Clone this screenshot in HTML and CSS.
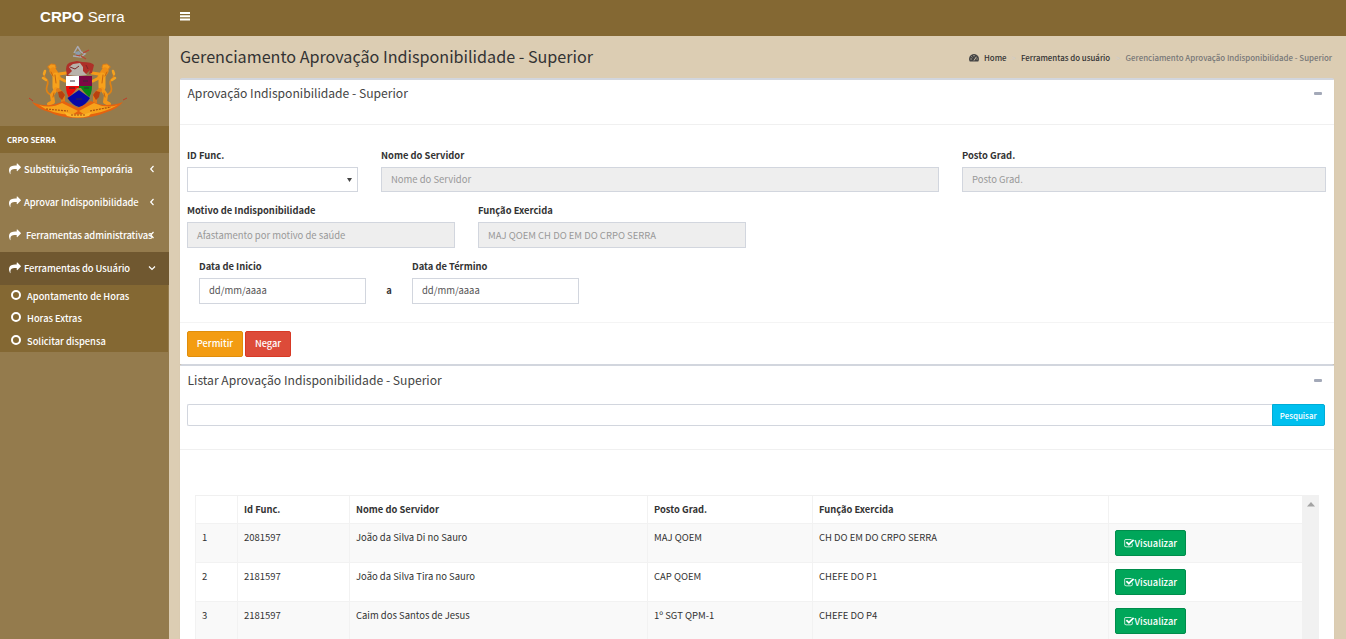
FILE: index.html
```html
<!DOCTYPE html>
<html lang="pt-BR">
<head>
<meta charset="utf-8">
<title>CRPO Serra</title>
<link rel="stylesheet" href="styles.css">
</head>
<body>
<svg class="defs" width="0" height="0">
  <symbol id="share" viewBox="0 0 1792 1792"><path d="M1792 640q0 26-19 45l-512 512q-19 19-45 19t-45-19-19-45v-256h-224q-98 0-175.500 6t-154 21.500-133 42.500-105.500 69.500-80 101-48.500 138.500-17.500 181q0 55 5 123 0 6 2.500 23.500t2.500 26.500q0 15-8.500 25t-23.500 10q-16 0-28-17-7-9-13-22t-13.500-30-10.500-24q-127-285-127-451 0-199 53-333 162-403 875-403h224v-256q0-26 19-45t45-19 45 19l512 512q19 19 19 45z"/></symbol>
  <symbol id="check" viewBox="0 0 1792 1792"><path d="M1472 930v318q0 119-84.500 203.500t-203.500 84.500h-832q-119 0-203.500-84.500t-84.500-203.500v-832q0-119 84.500-203.500t203.500-84.500h832q63 0 117 25 15 7 18 23 3 17-9 29l-49 49q-10 10-23 10-3 0-9-2-23-6-45-6h-832q-66 0-113 47t-47 113v832q0 66 47 113t113 47h832q66 0 113-47t47-113v-254q0-13 9-22l64-64q10-10 23-10 6 0 12 3 20 8 20 29zm231-489l-814 814q-24 24-57 24t-57-24l-430-430q-24-24-24-57t24-57l110-110q24-24 57-24t57 24l263 263 647-647q24-24 57-24t57 24l110 110q24 24 24 57t-24 57z"/></symbol>
</svg>
<header class="topbar">
  <div class="brand"><b>CRPO</b> Serra</div>
  <svg class="burger" width="10" height="9" viewBox="0 0 10 9"><path d="M0 0h10v2H0zM0 3.300h10v2H0zM0 6.600h10v2H0z" fill="#fff"/></svg>
</header>
<div class="page">
  <aside class="sidebar">
    <div class="crest">
      <svg width="100" height="76" viewBox="0 0 100 76">
        <defs>
          <g id="lion" fill="none" stroke-linecap="round" stroke-linejoin="round">
            <path d="M22 50Q16 47 18 41q2-5-1-7-3-3-1-7" stroke="#e08214" stroke-width="1.700"/>
            <path d="M16 26l-1 3M14 33l3 2" stroke="#f3a220" stroke-width="2.500"/>
            <path d="M19 21.500l3-2.500 4 .500 1 3-2 2.500-4-.500z" fill="#f49c1c" stroke="#df7e14"/>
            <path d="M24 26l4 6" stroke="#ee8d14" stroke-width="7"/>
            <path d="M27 31l0 11" stroke="#f7a11b" stroke-width="7"/>
            <path d="M30 29l7-1M30 33l6 3" stroke="#f59a18" stroke-width="3"/>
            <path d="M27 44l-4 6 1 7-4 2" stroke="#f39718" stroke-width="4"/>
            <path d="M29 45l5 5 0 8" stroke="#e17d18" stroke-width="4"/>
            <path d="M29 47l4-1 3 4-3 5-3-3z" fill="#b9400f"/>
            <path d="M26 30l1 8M22 27l2 4M25 48l-1 4" stroke="#c9660f" stroke-width="1"/>
          </g>
        </defs>
        <use href="#lion"/>
        <use href="#lion" transform="translate(100 0) scale(-1 1)"/>
        <path d="M3 57q10 4 18 3 8-1 14-4l14 7 13-7q7 4 15 4 10 0 17-3-6 7-16 10-14 6-29 6-17 0-29-6Q8 64 3 57z" fill="#e5620f"/>
        <path d="M10 60q12 4 23-2l16 8-6 4Q22 69 10 60zM89 60q-12 4-24-2l-15 8 6 4q19-2 33-10z" fill="#f7a21b"/>
        <path d="M35 67q14 5 28 0l-3 4q-11 3-22 0z" fill="#fbb52b"/>
        <path d="M17 64l22 2M61 66l21-4M42 70h14" stroke="#a9500f" stroke-width="1.200" stroke-dasharray="2 1"/>
        <path d="M37 24q0-6 6-7l5-1 5 1q10 0 12 3l-2 8-3 1 1-4-5 5-7-5-5 5-6 1z" fill="#ae3028"/>
        <path d="M44 19l7-1 3 4 0 4 4 4-9 1-10-1 4-4-3-4z" fill="#b8b2aa"/>
        <path d="M41 22l5 2 4-3M57 20l2 4" stroke="#7d2626" fill="none"/>
        <path d="M45 8l4-7M49 2l3 5 4 2-4 3-8-1" fill="none" stroke="#aaa9b2" stroke-width="1.500"/>
        <path d="M46 7l4-1 2 3-5 2z" fill="#8b9dac"/>
        <path d="M47 10l4 1M54 8l6-3M52 11l5 3" stroke="#b94434" stroke-width="1.200"/>
        <path d="M37 31h13v10H37z" fill="#fff"/><path d="M50 31h13v10H50z" fill="#7d0844"/>
        <path d="M37 41h13v4l-9 9q-4-5-4-13z" fill="#f00c08"/><path d="M50 41h13q0 8-4 13l-9-9z" fill="#078414"/>
        <path d="M39 53l6-6 3-4h4l3 4 6 6-2 2H41z" fill="#a88448"/>
        <path d="M38.500 53L50 45l11 8q-4 7-11 9-7-2-11.500-9z" fill="#0808a5"/>
        <path d="M41 36h5M54 36h5M40 43h6M55 43h5M47 54h6" stroke="#362b38" stroke-width="1.300" opacity=".65"/>
        <path d="M0 53l4 3M94 55l4-2" stroke="#c23b28"/>
      </svg>
    </div>
    <div class="side-head"><span>CRPO SERRA</span></div>
    <nav>
      <a class="item"><svg class="ic"><use href="#share"/></svg><span>Substituição Temporária</span><svg class="chev" viewBox="0 0 6 8"><path d="M4.500 1L1.700 4l2.800 3"/></svg></a>
      <a class="item"><svg class="ic"><use href="#share"/></svg><span>Aprovar Indisponibilidade</span><svg class="chev" viewBox="0 0 6 8"><path d="M4.500 1L1.700 4l2.800 3"/></svg></a>
      <a class="item"><svg class="ic"><use href="#share"/></svg><span class="wide">Ferramentas administrativas</span><svg class="chev" viewBox="0 0 6 8"><path d="M4.500 1L1.700 4l2.800 3"/></svg></a>
      <a class="item active"><svg class="ic"><use href="#share"/></svg><span>Ferramentas do Usuário</span><svg class="chev down" viewBox="0 0 8 6"><path d="M1 1.500l3 3 3-3"/></svg></a>
      <div class="sub">
        <a><i></i><span>Apontamento de Horas</span></a>
        <a><i></i><span>Horas Extras</span></a>
        <a><i></i><span>Solicitar dispensa</span></a>
      </div>
    </nav>
  </aside>
  <main class="content">
    <div class="heading">
      <h1>Gerenciamento Aprovação Indisponibilidade - Superior</h1>
      <div class="crumbs">
        <svg width="10" height="8" viewBox="0 0 10 8"><path d="M5 0a5 5 0 0 1 4.300 7.500H.7A5 5 0 0 1 5 0z" fill="#444"/><path d="M1.500 5h1.200M2.500 2.500l.8.800M5 1v1.300M7.400 2.800L5 6.500M7.600 5h1" stroke="#dccdb3" stroke-width=".9"/></svg>
        <span class="home">Home</span><em>&gt;</em><span class="mid">Ferramentas do usuário</span><em class="e2">&gt;</em><span class="here">Gerenciamento Aprovação Indisponibilidade - Superior</span>
      </div>
    </div>
    <section class="box form-box">
      <div class="box-head"><h3>Aprovação Indisponibilidade - Superior</h3><u></u></div>
      <div class="fields r1">
        <label><b>ID Func.</b><span class="ctl sel"><svg width="5" height="4" viewBox="0 0 5 4"><path d="M0 0h5L2.500 4z" fill="#444"/></svg></span></label>
        <label><b>Nome do Servidor</b><span class="ctl off">Nome do Servidor</span></label>
        <label><b>Posto Grad.</b><span class="ctl off">Posto Grad.</span></label>
      </div>
      <div class="fields r2">
        <label><b>Motivo de Indisponibilidade</b><span class="ctl off">Afastamento por motivo de saúde</span></label>
        <label><b>Função Exercida</b><span class="ctl off">MAJ QOEM CH DO EM DO CRPO SERRA</span></label>
      </div>
      <div class="fields r3">
        <label><b>Data de Inicio</b><span class="ctl">dd/mm/aaaa</span></label>
        <b class="sep">a</b>
        <label><b>Data de Término</b><span class="ctl">dd/mm/aaaa</span></label>
      </div>
      <div class="foot"><button class="btn allow">Permitir</button><button class="btn deny">Negar</button></div>
    </section>
    <section class="box list-box">
      <div class="box-head"><h3>Listar Aprovação Indisponibilidade - Superior</h3><u></u></div>
      <div class="search"><span></span><button>Pesquisar</button></div>
      <div class="scroller">
        <div class="grid">
          <div class="row th"><span></span><span>Id Func.</span><span>Nome do Servidor</span><span>Posto Grad.</span><span>Função Exercida</span><span></span></div>
          <div class="row odd"><span>1</span><span>2081597</span><span>João da Silva Di no Sauro</span><span>MAJ QOEM</span><span>CH DO EM DO CRPO SERRA</span><span><button class="btn view"><svg><use href="#check"/></svg>Visualizar</button></span></div>
          <div class="row"><span>2</span><span>2181597</span><span>João da Silva Tira no Sauro</span><span>CAP QOEM</span><span>CHEFE DO P1</span><span><button class="btn view"><svg><use href="#check"/></svg>Visualizar</button></span></div>
          <div class="row odd"><span>3</span><span>2181597</span><span>Caim dos Santos de Jesus</span><span>1º SGT QPM-1</span><span>CHEFE DO P4</span><span><button class="btn view"><svg><use href="#check"/></svg>Visualizar</button></span></div>
        </div>
        <div class="bar"><svg width="8" height="5" viewBox="0 0 8 5"><path d="M0 4.500L4 0l4 4.500z" fill="#a3a3a3"/></svg></div>
      </div>
    </section>
  </main>
</div>
</body>
</html>
```
FILE: styles.css
```css
* { box-sizing: border-box; }
body { margin: 0; height: 639px; overflow: hidden; background: #dccdb3; color: #333; font: 9.470px/16px "Noto Sans CJK SC", "Noto Sans", sans-serif; }
h1, h3 { margin: 0; font-weight: 400; white-space: nowrap; }
button { font: inherit; margin: 0; }
.defs { display: block; }
.topbar { height: 36px; background: #846833; display: flex; align-items: center; color: #fff; }
.brand { width: 179px; padding: 0 0 3px 40px; font: 15.100px/18px "Liberation Sans", Arial, sans-serif; white-space: nowrap; }
.burger { display: block; margin: -3px 0 0 .5px; }
.page { display: flex; height: 603px; }
.sidebar { width: 169px; flex: none; background: #947b4d; color: #fff; }
.crest { height: 90px; padding: 9px 0 0 29px; }
.crest svg { display: block; }
.side-head { height: 27px; background: #846833; padding: 6px 0 0 7px; font-size: 7.800px; font-weight: 700; }
.item { position: relative; display: flex; align-items: center; height: 33px; padding-left: 9px; font-size: 9.400px; letter-spacing: -.06px; white-space: nowrap; font-weight: 500; }
.item span { margin-top: -1px; }
.ic { width: 12px; height: 12px; fill: #fff; margin: -1px 3px 0 0; }
.item .wide { margin-left: 2px; }
.chev { position: absolute; left: 149px; top: 12px; width: 6px; height: 8px; fill: none; stroke: #fff; stroke-width: 1.200; }
.chev.down { width: 8px; height: 6px; left: 148px; top: 13px; }
.active { background: #705830; }
.sub { width: 168px; height: 67px; background: #846833; font-size: 9.300px; font-weight: 500; }
.sub a { display: flex; align-items: center; height: 22.300px; padding-left: 11px; }
.sub i { width: 10px; height: 10px; border: 2px solid #fff; border-radius: 50%; margin: -2px 6px 0 0; }
.content { width: 1177px; padding: 0 12px 0 11px; }
.heading { height: 42px; display: flex; justify-content: space-between; }
h1 { font-size: 16.150px; line-height: 40px; }
.crumbs { display: flex; align-items: center; height: 44px; font-size: 7.880px; font-weight: 500; white-space: nowrap; padding-right: 2px; }
.crumbs svg { margin-right: 5px; }
.crumbs em { font-style: normal; color: #ccc; margin: 0 5px; font-weight: 400; }
.crumbs .e2 { margin: 0 5.500px; }
.here { color: #777; }
.box { width: 1154px; background: #fff; border-top: 2px solid #d2d6de; border-radius: 2px 2px 0 0; box-shadow: 0 1px 1px rgba(0,0,0,.1); }
.form-box { height: 286px; }
.box-head { display: flex; justify-content: space-between; padding: 0 12px 0 7.500px; height: 45px; border-bottom: 1px solid #f0f0f0; color: #444; }
h3 { font-size: 12.130px; line-height: 26px; }
.list-box h3 { line-height: 28px; }
.box-head u { width: 8px; height: 3px; background: #a3a9b8; margin-top: 12px; border-radius: 1px; }
.list-box u { margin-top: 13px; }
.fields { display: grid; column-gap: 23px; padding-left: 7px; }
.fields label b { display: block; height: 20px; line-height: 16px; }
.fields b { font-size: 9.380px; }
.r1 { grid-template-columns: 171px 558px 364px; margin-top: 22px; height: 55px; }
.r2 { grid-template-columns: 268px 268px; height: 56px; }
.r3 { grid-template-columns: 167px 46px 167px; column-gap: 0; padding-left: 19px; height: 64px; }
.ctl { display: block; height: 26px; border: 1px solid #d2d6de; padding-left: 9px; line-height: 23px; color: #555; white-space: nowrap; }
.r1 .ctl { height: 25px; }
.r2 .ctl { line-height: 25px; }
.off { background: #eee; color: #999; }
.r1 .sel { display: flex; justify-content: flex-end; align-items: center; padding-right: 5px; }
.sep { text-align: center; padding-top: 24px; }
.foot { border-top: 1px solid #f4f4f4; padding: 8px 0 0 7px; display: flex; gap: 2px; }
.btn { height: 26px; border: 1px solid; border-radius: 2px; color: #fff; padding: 0; font-size: 9.250px; font-weight: 500; line-height: 22px; white-space: nowrap; }
.foot .btn { padding-bottom: 2px; }
.allow { width: 56px; background: #f39c12; border-color: #e08e0b; }
.deny { width: 46px; background: #dd4b39; border-color: #d73925; }
.list-box { height: 280px; }
.list-box .box-head { height: 38px; border: 0; }
.search { height: 46px; display: flex; padding: 0 9px 23px 7px; border-bottom: 1px solid #f0f0f0; }
.search span { flex: 1; border: 1px solid #d2d6de; border-right: 0; border-radius: 2px 0 0 2px; }
.search button { width: 53.500px; padding: 2px 0 0; background: #00c0ef; border: 1px solid #00acd6; border-radius: 0 2px 2px 0; color: #fff; font-size: 7.900px; font-weight: 500; }
.scroller { display: flex; margin: 45px 0 0 15px; }
.grid { width: 1107px; border-top: 1px solid #f0f0f0; }
.row { display: grid; grid-template-columns: 42px 112px 298px 165px 296px 194px; height: 39px; border-bottom: 1px solid #f2f2f2; }
.row.th { height: 28px; font-size: 9.350px; font-weight: 700; }
.row > span { border-left: 1px solid #f2f2f2; padding: 5px 0 0 6px; white-space: nowrap; }
.row > span:last-child { padding-top: 6px; }
.odd { background: #f9f9f9; }
.view { display: flex; align-items: center; justify-content: center; width: 71px; background: #00a65a; border-color: #008d4c; }
.view svg { width: 10.500px; height: 11px; fill: #fff; }
.bar { width: 17px; background: #f1f1f1; padding: 7px 0 0 4.500px; }
.bar svg { display: block; }
```
